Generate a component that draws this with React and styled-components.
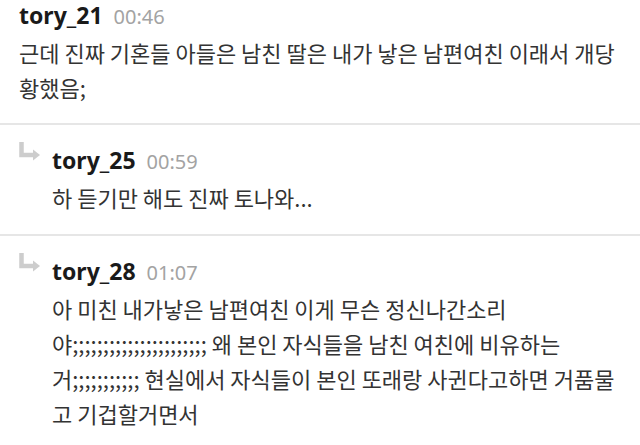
import React from 'react'
import styled, { createGlobalStyle } from 'styled-components'

const Global = createGlobalStyle`
  html, body {
    margin: 0;
    padding: 0;
    background: #ffffff;
  }
  body {
    font-family: "Noto Sans CJK KR", "Noto Sans", sans-serif;
    -webkit-font-smoothing: antialiased;
  }
`

const List = styled.div`
  width: 640px;
  height: 445px;
  overflow: hidden;
  background: #fff;
`

const Comment = styled.div`
  display: flex;
  padding: ${p => (p.$reply ? '20px 0 19px 18px' : '0 0 18px 19px')};
  & + & {
    border-top: 2px solid #e6e6e6;
  }
`

const ArrowCol = styled.div`
  width: 34px;
  flex: none;
  margin-top: -3px;
`

const Body = styled.div`
  flex: 1;
  min-width: 0;
`

const Header = styled.div`
  display: flex;
  align-items: baseline;
  gap: 11px;
  height: 30px;
  line-height: 30px;
  margin-bottom: 5px;
`

const Name = styled.span`
  font-family: "Noto Sans", "Noto Sans CJK KR", sans-serif;
  font-weight: 700;
  font-size: 23px;
  color: #1a1a1a;
`

const Time = styled.span`
  font-family: "Noto Sans", sans-serif;
  font-size: 20px;
  color: #a3a3a3;
`

const Text = styled.div`
  font-size: 22px;
  line-height: 35px;
  color: #333;
  padding-right: 14px;
  word-break: break-all;
`

const ReplyArrow = () => (
  <svg width="24" height="20" viewBox="0 0 24 20">
    <path d="M3.5 0 V13 H16" fill="none" stroke="#cdcdcd" strokeWidth="4.5" />
    <polygon points="15,7.5 22,13 15,18.5" fill="#cdcdcd" />
  </svg>
)

const comments = [
  {
    id: 1,
    name: 'tory_21',
    time: '00:46',
    text: '근데 진짜 기혼들 아들은 남친 딸은 내가 낳은 남편여친 이래서 개당황했음;',
  },
  {
    id: 2,
    reply: true,
    name: 'tory_25',
    time: '00:59',
    text: '하 듣기만 해도 진짜 토나와...',
  },
  {
    id: 3,
    reply: true,
    name: 'tory_28',
    time: '01:07',
    text:
      '아 미친 내가낳은 남편여친 이게 무슨 정신나간소리야;;;;;;;;;;;;;;;;;;;;;; 왜 본인 자식들을 남친 여친에 비유하는거;;;;;;;;;;; 현실에서 자식들이 본인 또래랑 사귄다고하면 거품물고 기겁할거면서',
  },
]

const App = () => (
  <List>
    <Global />
    {comments.map(c => (
      <Comment key={c.id} $reply={c.reply}>
        {c.reply && (
          <ArrowCol>
            <ReplyArrow />
          </ArrowCol>
        )}
        <Body>
          <Header>
            <Name>{c.name}</Name>
            <Time>{c.time}</Time>
          </Header>
          <Text>{c.text}</Text>
        </Body>
      </Comment>
    ))}
  </List>
)

export default App
